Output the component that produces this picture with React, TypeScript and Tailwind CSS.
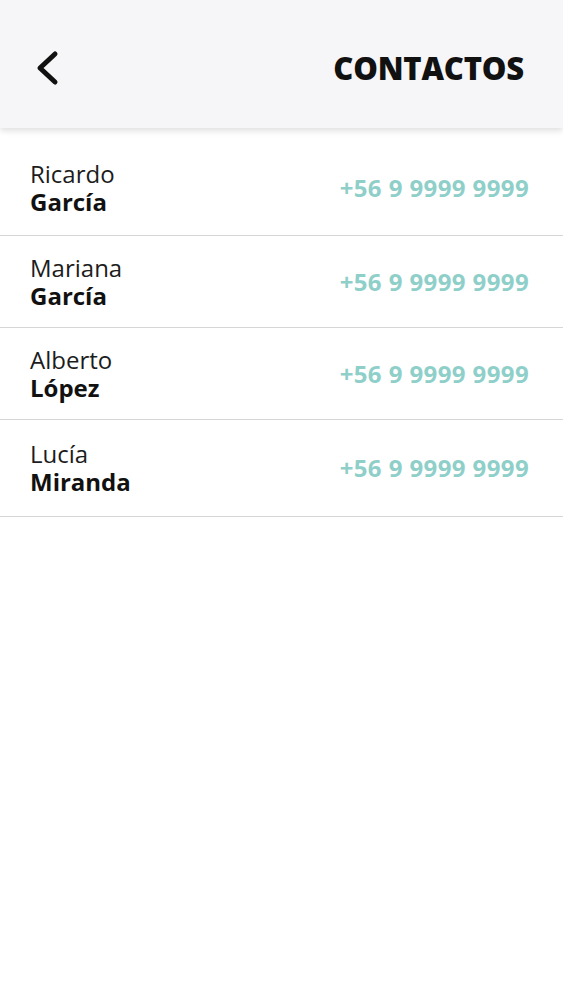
import React from "react";

const contacts = [
  { first: "Ricardo", last: "García", phone: "+56 9 9999 9999", h: "h-[96px]" },
  { first: "Mariana", last: "García", phone: "+56 9 9999 9999", h: "h-[92px]" },
  { first: "Alberto", last: "López", phone: "+56 9 9999 9999", h: "h-[92px]" },
  { first: "Lucía", last: "Miranda", phone: "+56 9 9999 9999", h: "h-[97px]" },
];

export default function App() {
  return (
    <div
      className="min-h-[1000px] w-full bg-white"
      style={{ fontFamily: '"Open Sans", "Noto Sans", sans-serif' }}
    >
      <header className="relative z-10 flex h-[128px] items-center justify-between bg-[#f6f6f8] pl-[35px] pr-[39px] pt-[8px] shadow-[0_3px_6px_rgba(0,0,0,0.12)]">
        <button className="flex h-[38px] w-[24px] items-center justify-center" aria-label="Volver">
          <svg width="24" height="38" viewBox="0 0 24 38" fill="none">
            <polyline
              points="20,5 5,19 20,33"
              stroke="#111"
              strokeWidth="5"
              strokeLinecap="round"
              strokeLinejoin="round"
            />
          </svg>
        </button>
        <h1 className="text-[31px] font-extrabold leading-none tracking-[-0.2px] text-[#111]">
          CONTACTOS
        </h1>
      </header>
      <ul className="pt-[12px]">
        {contacts.map((c, i) => (
          <li
            key={i}
            className={`flex ${c.h} items-center justify-between border-b border-[#d6d6d8] pl-[30px] pr-[34px]`}
          >
            <div className="flex flex-col">
              <span className="text-[24px] leading-[28px] text-[#1c1c1c]">{c.first}</span>
              <span className="text-[24px] font-bold leading-[28px] text-[#111]">{c.last}</span>
            </div>
            <span className="text-[24px] font-bold tracking-[0.4px] text-[#8fcfc9]">{c.phone}</span>
          </li>
        ))}
      </ul>
    </div>
  );
}
